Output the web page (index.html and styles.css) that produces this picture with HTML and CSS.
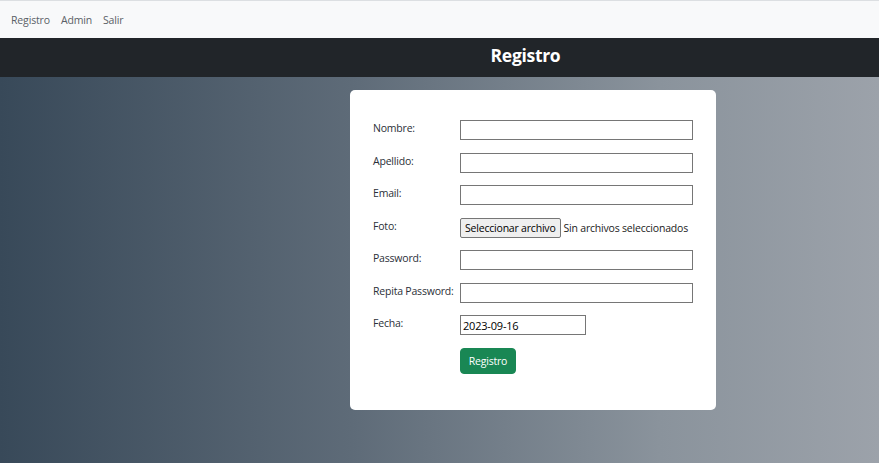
FILE: index.html
```html
<!DOCTYPE html>
<html lang="es">
<head>
<meta charset="utf-8">
<title>Registro</title>
<link rel="stylesheet" href="styles.css">
</head>
<body>
<nav class="topnav">
  <a href="#">Registro</a>
  <a href="#">Admin</a>
  <a href="#">Salir</a>
</nav>
<header class="titlebar"><h1>Registro</h1></header>
<main class="stage">
  <form class="card">
    <label class="lbl">Nombre:</label>
    <input class="field" type="text">
    <label class="lbl">Apellido:</label>
    <input class="field" type="text">
    <label class="lbl">Email:</label>
    <input class="field" type="text">
    <label class="lbl">Foto:</label>
    <div class="file"><span class="file-btn">Seleccionar archivo</span><span class="file-txt">Sin archivos seleccionados</span></div>
    <label class="lbl">Password:</label>
    <input class="field" type="password">
    <label class="lbl">Repita Password:</label>
    <input class="field" type="password">
    <label class="lbl">Fecha:</label>
    <input class="field date" type="text" value="2023-09-16">
    <span></span>
    <div><button class="submit" type="button">Registro</button></div>
  </form>
</main>
</body>
</html>
```
FILE: styles.css
```css
* { box-sizing: border-box; }
html, body { margin: 0; height: 100%; }
body {
  font-family: "Open Sans", "Noto Sans", sans-serif;
  color: #212529;
  display: flex;
  flex-direction: column;
}
.topnav {
  height: 38px;
  background: #f8f9fa;
  border-top: 1px solid #dcdfe2;
  display: flex;
  align-items: center;
  gap: 11px;
  padding: 0 11px;
}
.topnav a {
  font-size: 10.5px;
  color: #5a5f66;
  text-decoration: none;
  letter-spacing: -0.15px;
}
.titlebar {
  height: 39px;
  background: #212529;
  display: flex;
  align-items: center;
  justify-content: center;
  padding-left: 172px;
  padding-bottom: 5px;
}
.titlebar h1 {
  margin: 0;
  color: #fff;
  font-size: 17.5px;
  font-weight: 700;
  letter-spacing: -0.3px;
}
.stage {
  flex: 1;
  background: linear-gradient(to right, #384959 0%, #5e6b78 40%, #8a939c 75%, #9ca2aa 100%);
  padding: 13px 0 0 350px;
}
.card {
  width: 366px;
  background: #fff;
  border-radius: 5px;
  padding: 30px 23px 36px 23px;
  display: grid;
  grid-template-columns: 87px 233px;
  row-gap: 12.5px;
  align-items: start;
}
.lbl {
  font-size: 10.5px;
  line-height: 16px;
  color: #2b2f38;
  white-space: nowrap;
  letter-spacing: -0.2px;
}
.field {
  height: 20px;
  width: 233px;
  border: 1px solid #767676;
  border-radius: 0;
  margin: 0;
  padding: 1px 2px;
  font-family: "Open Sans", sans-serif;
  font-size: 11px;
  color: #000;
  outline: none;
}
.field.date { width: 126px; letter-spacing: -0.2px; }
.file {
  display: flex;
  align-items: center;
  height: 20px;
  white-space: nowrap;
}
.file-btn {
  height: 20px;
  display: inline-flex;
  align-items: center;
  padding: 0 4px;
  background: #efefef;
  border: 1px solid #767676;
  border-radius: 2px;
  font-size: 10.5px;
  color: #000;
  letter-spacing: -0.2px;
}
.file-txt {
  font-size: 10.5px;
  color: #222;
  margin-left: 3px;
  letter-spacing: -0.2px;
}
.submit {
  height: 26px;
  width: 56px;
  background: #198754;
  border: 1px solid #198754;
  border-radius: 4px;
  color: #fff;
  font-family: "Open Sans", sans-serif;
  font-size: 10.5px;
  padding: 0;
  letter-spacing: -0.2px;
}
```
